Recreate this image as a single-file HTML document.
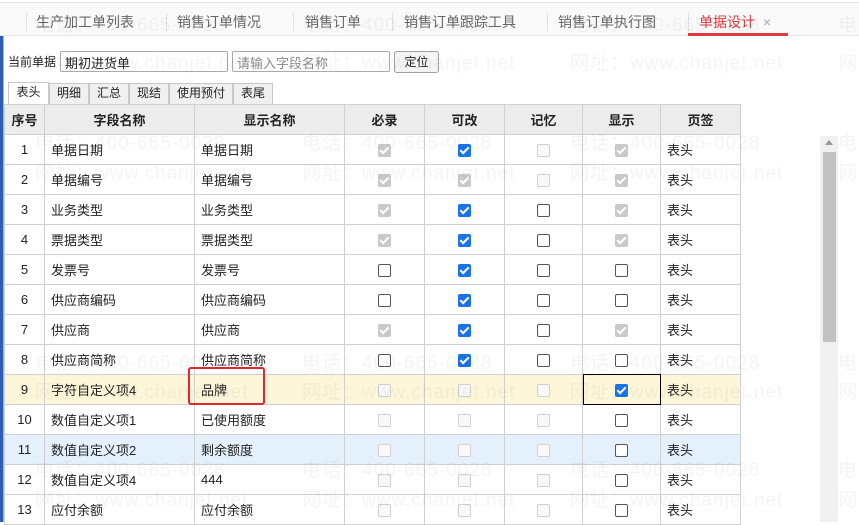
<!DOCTYPE html>
<html><head><meta charset="utf-8"><style>
*{box-sizing:border-box;margin:0;padding:0}
body{width:859px;height:522px;overflow:hidden;background:#fff;font-family:"Liberation Sans","Noto Sans CJK SC",sans-serif;font-size:13px;color:#222;position:relative}
.topline{position:absolute;left:0;top:2px;width:859px;height:1px;background:#e4e4e4}
.tabbar{position:absolute;left:0;top:3px;width:859px;height:33px;background:#fafafa;border-bottom:1px solid #e6e6e6}
.tab{position:absolute;top:9px;font-size:14px;color:#666}
.sep{position:absolute;top:10px;width:1px;height:18px;background:#e0e0e0}
.act{color:#e0393e}
.ul{position:absolute;left:688px;top:30px;width:100px;height:3px;background:#e0393e}
.lb{position:absolute;left:0;top:36px;width:4px;height:486px;background:#2b5fb4;border-right:1px solid #9bb6e0}
.lbl{position:absolute;left:8px;top:53px;font-size:12px}
.inp{position:absolute;top:51px;height:21px;border:1px solid #a9a9a9;border-radius:2px;font-size:13px;padding:1px 4px;background:#fff}
.btn{position:absolute;left:394px;top:51px;width:45px;height:22px;border:1px solid #a0a0a0;border-radius:3px;background:#f4f4f4;font-size:12px;text-align:center;line-height:20px}
.st{position:absolute;top:83px;height:21px;border:1px solid #c8c8c8;border-bottom:none;background:#f0f0f0;font-size:12px;text-align:center;line-height:19px}
.st.a{background:#fff;top:82px;height:22px}
table{position:absolute;left:4px;top:104px;border-collapse:collapse;table-layout:fixed}
td,th{border:1px solid #d0d0d0;height:30px;font-size:13px;white-space:nowrap;overflow:hidden}
th{background:#ececec;font-weight:bold;text-align:center}
td{padding-left:6px}
td.n{text-align:center;padding:0}
td.k{text-align:center;padding:0}
tr.y td{background:#fdf6d8}
tr.b td{background:#e5f0fd}
.cb{display:inline-block;width:13px;height:13px;border-radius:2px;vertical-align:middle;position:relative}
.c{background:#1a73e8}
.dc{background:#c9c9c9}
.c::after,.dc::after{content:"";position:absolute;left:4px;top:1px;width:3px;height:7px;border:solid #fff;border-width:0 2px 2px 0;transform:rotate(45deg)}
.u{border:1px solid #555;background:#fff}
.d{border:1px solid #d0d0d0;background:#f8f8f8}
.red{position:absolute;left:188px;top:367px;width:77px;height:38px;border:2px solid #e0282e;border-radius:3px}
.foc{position:absolute;left:583px;top:374px;width:78px;height:31px;border:1px solid #000}
.sb{position:absolute;left:820px;top:136px;width:18px;height:386px;background:#f0f0f0}
.thumb{position:absolute;left:823px;top:152px;width:13px;height:190px;background:#c1c1c1}
.arr{position:absolute;left:825px;top:140px;width:0;height:0;border-left:4px solid transparent;border-right:4px solid transparent;border-bottom:5px solid #999}
.wm{position:absolute;font-size:19px;color:rgba(0,0,0,0.045);white-space:nowrap;letter-spacing:1px;pointer-events:none;z-index:5}
</style></head><body>
<div class="topline"></div>
<div class="tabbar">
<div class="sep" style="left:26px"></div>
<div class="tab" style="left:36px">生产加工单列表</div>
<div class="sep" style="left:166px"></div>
<div class="tab" style="left:177px">销售订单情况</div>
<div class="sep" style="left:293px"></div>
<div class="tab" style="left:305px">销售订单</div>
<div class="sep" style="left:392px"></div>
<div class="tab" style="left:404px">销售订单跟踪工具</div>
<div class="sep" style="left:547px"></div>
<div class="tab" style="left:558px">销售订单执行图</div>
<div class="sep" style="left:688px"></div>
<div class="tab act" style="left:699px">单据设计 <span style="color:#aaa;margin-left:4px">×</span></div>
<div class="ul"></div>
</div>
<div class="lb"></div>
<div class="lbl">当前单据</div>
<div class="inp" style="left:60px;width:168px">期初进货单</div>
<div class="inp" style="left:232px;width:158px;color:#888">请输入字段名称</div>
<div class="btn">定位</div>
<div class="st a" style="left:8px;width:41px">表头</div>
<div class="st" style="left:49px;width:40px">明细</div>
<div class="st" style="left:89px;width:40px">汇总</div>
<div class="st" style="left:129px;width:40px">现结</div>
<div class="st" style="left:169px;width:64px">使用预付</div>
<div class="st" style="left:233px;width:40px">表尾</div>
<table>
<colgroup><col style="width:40px"><col style="width:150px"><col style="width:150px"><col style="width:80px"><col style="width:80px"><col style="width:78px"><col style="width:78px"><col style="width:80px"></colgroup>
<tr><th>序号</th><th>字段名称</th><th>显示名称</th><th>必录</th><th>可改</th><th>记忆</th><th>显示</th><th>页签</th></tr>
<tr><td class="n">1</td><td>单据日期</td><td>单据日期</td><td class="k"><span class="cb dc"></span></td><td class="k"><span class="cb c"></span></td><td class="k"><span class="cb d"></span></td><td class="k"><span class="cb dc"></span></td><td>表头</td></tr>
<tr><td class="n">2</td><td>单据编号</td><td>单据编号</td><td class="k"><span class="cb dc"></span></td><td class="k"><span class="cb dc"></span></td><td class="k"><span class="cb d"></span></td><td class="k"><span class="cb dc"></span></td><td>表头</td></tr>
<tr><td class="n">3</td><td>业务类型</td><td>业务类型</td><td class="k"><span class="cb dc"></span></td><td class="k"><span class="cb c"></span></td><td class="k"><span class="cb u"></span></td><td class="k"><span class="cb dc"></span></td><td>表头</td></tr>
<tr><td class="n">4</td><td>票据类型</td><td>票据类型</td><td class="k"><span class="cb dc"></span></td><td class="k"><span class="cb c"></span></td><td class="k"><span class="cb u"></span></td><td class="k"><span class="cb dc"></span></td><td>表头</td></tr>
<tr><td class="n">5</td><td>发票号</td><td>发票号</td><td class="k"><span class="cb u"></span></td><td class="k"><span class="cb c"></span></td><td class="k"><span class="cb u"></span></td><td class="k"><span class="cb u"></span></td><td>表头</td></tr>
<tr><td class="n">6</td><td>供应商编码</td><td>供应商编码</td><td class="k"><span class="cb u"></span></td><td class="k"><span class="cb c"></span></td><td class="k"><span class="cb u"></span></td><td class="k"><span class="cb u"></span></td><td>表头</td></tr>
<tr><td class="n">7</td><td>供应商</td><td>供应商</td><td class="k"><span class="cb dc"></span></td><td class="k"><span class="cb c"></span></td><td class="k"><span class="cb u"></span></td><td class="k"><span class="cb dc"></span></td><td>表头</td></tr>
<tr><td class="n">8</td><td>供应商简称</td><td>供应商简称</td><td class="k"><span class="cb u"></span></td><td class="k"><span class="cb c"></span></td><td class="k"><span class="cb u"></span></td><td class="k"><span class="cb u"></span></td><td>表头</td></tr>
<tr class="y"><td class="n">9</td><td>字符自定义项4</td><td>品牌</td><td class="k"><span class="cb d"></span></td><td class="k"><span class="cb d"></span></td><td class="k"><span class="cb d"></span></td><td class="k"><span class="cb c"></span></td><td>表头</td></tr>
<tr><td class="n">10</td><td>数值自定义项1</td><td>已使用额度</td><td class="k"><span class="cb d"></span></td><td class="k"><span class="cb d"></span></td><td class="k"><span class="cb d"></span></td><td class="k"><span class="cb u"></span></td><td>表头</td></tr>
<tr class="b"><td class="n">11</td><td>数值自定义项2</td><td>剩余额度</td><td class="k"><span class="cb d"></span></td><td class="k"><span class="cb d"></span></td><td class="k"><span class="cb d"></span></td><td class="k"><span class="cb u"></span></td><td>表头</td></tr>
<tr><td class="n">12</td><td>数值自定义项4</td><td>444</td><td class="k"><span class="cb d"></span></td><td class="k"><span class="cb d"></span></td><td class="k"><span class="cb d"></span></td><td class="k"><span class="cb u"></span></td><td>表头</td></tr>
<tr><td class="n">13</td><td>应付余额</td><td>应付余额</td><td class="k"><span class="cb d"></span></td><td class="k"><span class="cb d"></span></td><td class="k"><span class="cb d"></span></td><td class="k"><span class="cb u"></span></td><td>表头</td></tr>
</table>
<div class="red"></div>
<div class="foc"></div>
<div class="sb"></div><div class="thumb"></div><div class="arr"></div>

<div class="wm" style="left:35px;top:10px">电话：400-665-0028</div>
<div class="wm" style="left:302px;top:10px">电话：400-665-0028</div>
<div class="wm" style="left:570px;top:10px">电话：400-665-0028</div>
<div class="wm" style="left:838px;top:10px">电话</div>
<div class="wm" style="left:35px;top:48px">网址：www.chanjet.net</div>
<div class="wm" style="left:302px;top:48px">网址：www.chanjet.net</div>
<div class="wm" style="left:570px;top:48px">网址：www.chanjet.net</div>
<div class="wm" style="left:838px;top:48px">网址</div>

<div class="wm" style="left:35px;top:128px">电话：400-665-0028</div>
<div class="wm" style="left:302px;top:128px">电话：400-665-0028</div>
<div class="wm" style="left:570px;top:128px">电话：400-665-0028</div>
<div class="wm" style="left:838px;top:128px">电话</div>
<div class="wm" style="left:35px;top:158px">网址：www.chanjet.net</div>
<div class="wm" style="left:302px;top:158px">网址：www.chanjet.net</div>
<div class="wm" style="left:570px;top:158px">网址：www.chanjet.net</div>
<div class="wm" style="left:838px;top:158px">网址</div>

<div class="wm" style="left:35px;top:348px">电话：400-665-0028</div>
<div class="wm" style="left:302px;top:348px">电话：400-665-0028</div>
<div class="wm" style="left:570px;top:348px">电话：400-665-0028</div>
<div class="wm" style="left:838px;top:348px">电话</div>
<div class="wm" style="left:35px;top:377px">网址：www.chanjet.net</div>
<div class="wm" style="left:302px;top:377px">网址：www.chanjet.net</div>
<div class="wm" style="left:570px;top:377px">网址：www.chanjet.net</div>
<div class="wm" style="left:838px;top:377px">网址</div>

<div class="wm" style="left:35px;top:455px">电话：400-665-0028</div>
<div class="wm" style="left:302px;top:455px">电话：400-665-0028</div>
<div class="wm" style="left:570px;top:455px">电话：400-665-0028</div>
<div class="wm" style="left:838px;top:455px">电话</div>
<div class="wm" style="left:35px;top:485px">网址：www.chanjet.net</div>
<div class="wm" style="left:302px;top:485px">网址：www.chanjet.net</div>
<div class="wm" style="left:570px;top:485px">网址：www.chanjet.net</div>
<div class="wm" style="left:838px;top:485px">网址</div>
</body></html>
